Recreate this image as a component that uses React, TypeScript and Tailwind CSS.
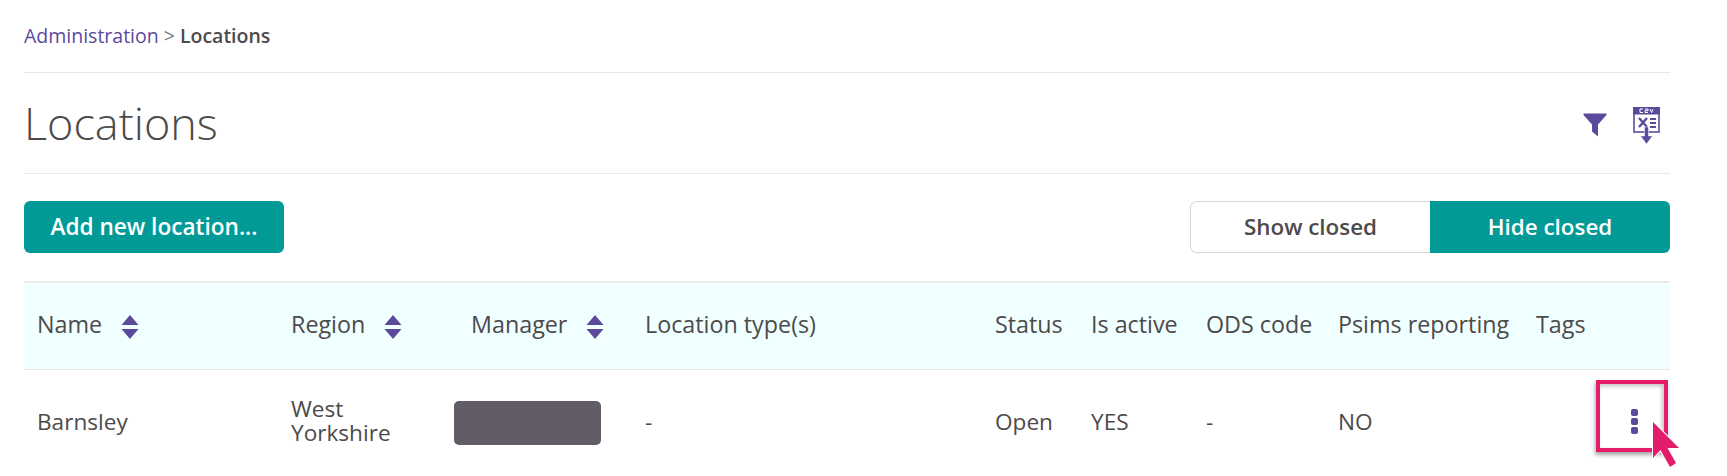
import React from "react";

const font = { fontFamily: '"Open Sans", "Noto Sans", sans-serif' };

function Sort() {
  return (
    <svg width="18" height="24" viewBox="0 0 18 24" className="shrink-0" aria-hidden="true">
      <path d="M9 0 L17.5 10 H0.5 Z" fill="#5b4a9b" />
      <path d="M0.5 14 H17.5 L9 24 Z" fill="#5b4a9b" />
    </svg>
  );
}

function Funnel() {
  return (
    <svg width="24" height="24" viewBox="0 0 24 24" aria-hidden="true">
      <path d="M0.5 0.5 H23.5 V2 L15 11.5 V23.5 L9 18.5 V11.5 L0.5 2 Z" fill="#5b4a9b" />
    </svg>
  );
}

function Csv() {
  return (
    <svg width="27" height="37" viewBox="0 0 27 37" aria-hidden="true">
      <rect x="1" y="1" width="25" height="24" fill="#fff" stroke="#7d70b0" strokeWidth="2" />
      <rect x="0" y="0" width="27" height="7.5" fill="#5b4a9b" />
      <path d="M7 2 H10 M7 2 V5.5 M7 5.5 H10 M12 2 H15 V3.7 H12 V5.5 H15 M17 2 L18.5 5.5 L20 2" stroke="#fff" strokeWidth="1" fill="none" />
      <path d="M6 11 L14 20 M14 11 L6 20" stroke="#5b4a9b" strokeWidth="2.4" />
      <path d="M17 12 H23 M17 16 H23 M17 20 H23" stroke="#5b4a9b" strokeWidth="2.2" />
      <path d="M11.5 20 H15.5 V29 H19.5 L13.5 37 L7.5 29 H11.5 Z" fill="#5b4a9b" stroke="#fff" strokeWidth="0.5" />
    </svg>
  );
}

function Cursor() {
  return (
    <svg width="30" height="50" viewBox="0 0 30 50" aria-hidden="true">
      <path
        d="M1 1 L27 27 L15.5 27 L24 42 L18 46 L8.5 29 L1 37 Z"
        fill="#e31c6b"
        stroke="#fff"
        strokeWidth="2"
        strokeLinejoin="round"
        paintOrder="stroke"
      />
    </svg>
  );
}

function Th({ children, sort, className = "pl-[13px]" }: { children: React.ReactNode; sort?: boolean; className?: string }) {
  return (
    <th className={`p-0 pb-[3px] text-left align-middle font-medium ${className}`}>
      <div className="flex items-center gap-[19px] whitespace-nowrap">
        <span>{children}</span>
        {sort && <span className="mt-[5px] flex"><Sort /></span>}
      </div>
    </th>
  );
}

function Td({ children, className = "pl-[13px]" }: { children?: React.ReactNode; className?: string }) {
  return <td className={`p-0 align-middle ${className}`}>{children}</td>;
}

export default function App() {
  return (
    <div className="relative h-[476px] w-[1727px] overflow-hidden bg-white text-[#4d4a4a]" style={font}>
      <div className="ml-6 w-[1646px]">
        <nav className="flex h-[72px] items-center pb-[1px] text-[19.5px]">
          <span className="text-[#5b4a9b]">Administration</span>
          <span className="mx-[5px] text-[#777]">&gt;</span>
          <span className="font-semibold">Locations</span>
        </nav>

        <header className="flex h-[102px] items-center justify-between border-y border-[#e9e9e9]">
          <h1 className="mb-[2px] text-[45px] leading-none font-light">Locations</h1>
          <div className="mr-[10px] flex items-center gap-[26px] pt-[4px]">
            <Funnel />
            <Csv />
          </div>
        </header>

        <div className="mt-[27px] flex items-center justify-between">
          <button className="h-[52px] w-[260px] rounded-[6px] bg-[#029a96] pb-[1px] text-[22.6px] font-semibold text-white">
            Add new location...
          </button>
          <div className="flex h-[52px] w-[480px] overflow-hidden rounded-[6px] text-[22.4px] font-semibold">
            <button className="w-[240px] rounded-l-[6px] border border-r-0 border-[#d4d4d4] bg-white pb-[1px]">Show closed</button>
            <button className="w-[240px] bg-[#029a96] pb-[1px] text-white">Hide closed</button>
          </div>
        </div>

        <table className="mt-[28px] w-full table-fixed border-collapse text-[22.6px]">
          <colgroup>
            <col className="w-[254px]" />
            <col className="w-[176px]" />
            <col className="w-[178px]" />
            <col className="w-[350px]" />
            <col className="w-[96px]" />
            <col className="w-[115px]" />
            <col className="w-[132px]" />
            <col className="w-[198px]" />
            <col className="w-[147px]" />
          </colgroup>
          <thead>
            <tr className="h-[87px] border-t-2 border-b border-[#e9e9e9] bg-[#f0ffff] text-[23.3px]">
              <Th sort>Name</Th>
              <Th sort>Region</Th>
              <Th sort className="pl-[17px]">Manager</Th>
              <Th>Location type(s)</Th>
              <Th>Status</Th>
              <Th>Is active</Th>
              <Th>ODS code</Th>
              <Th>Psims reporting</Th>
              <Th>Tags</Th>
            </tr>
          </thead>
          <tbody>
            <tr className="h-[105px]">
              <Td>Barnsley</Td>
              <Td><div className="mb-[2px] w-[110px] leading-[24px]">West Yorkshire</div></Td>
              <Td className="pl-0"><div className="mt-[2px] h-[44px] w-[147px] rounded-[5px] bg-[#625c67]" /></Td>
              <Td>-</Td>
              <Td>Open</Td>
              <Td>YES</Td>
              <Td>-</Td>
              <Td>NO</Td>
              <Td>
                <div className="ml-[95px] flex w-[7px] flex-col gap-[2px]">
                  <span className="h-[7px] w-[7px] rounded-[2px] bg-[#5b4a9b]" />
                  <span className="h-[7px] w-[7px] rounded-[2px] bg-[#5b4a9b]" />
                  <span className="h-[7px] w-[7px] rounded-[2px] bg-[#5b4a9b]" />
                </div>
              </Td>
            </tr>
          </tbody>
        </table>
      </div>

      <div className="absolute top-[380px] left-[1596px] h-[72px] w-[72px] border-4 border-[#e31c6b] shadow-[-1px_3px_4px_rgba(0,0,0,0.35),inset_-2px_2px_4px_rgba(0,0,0,0.25)]" />
      <div className="absolute top-[421px] left-[1652px] flex"><Cursor /></div>
    </div>
  );
}
